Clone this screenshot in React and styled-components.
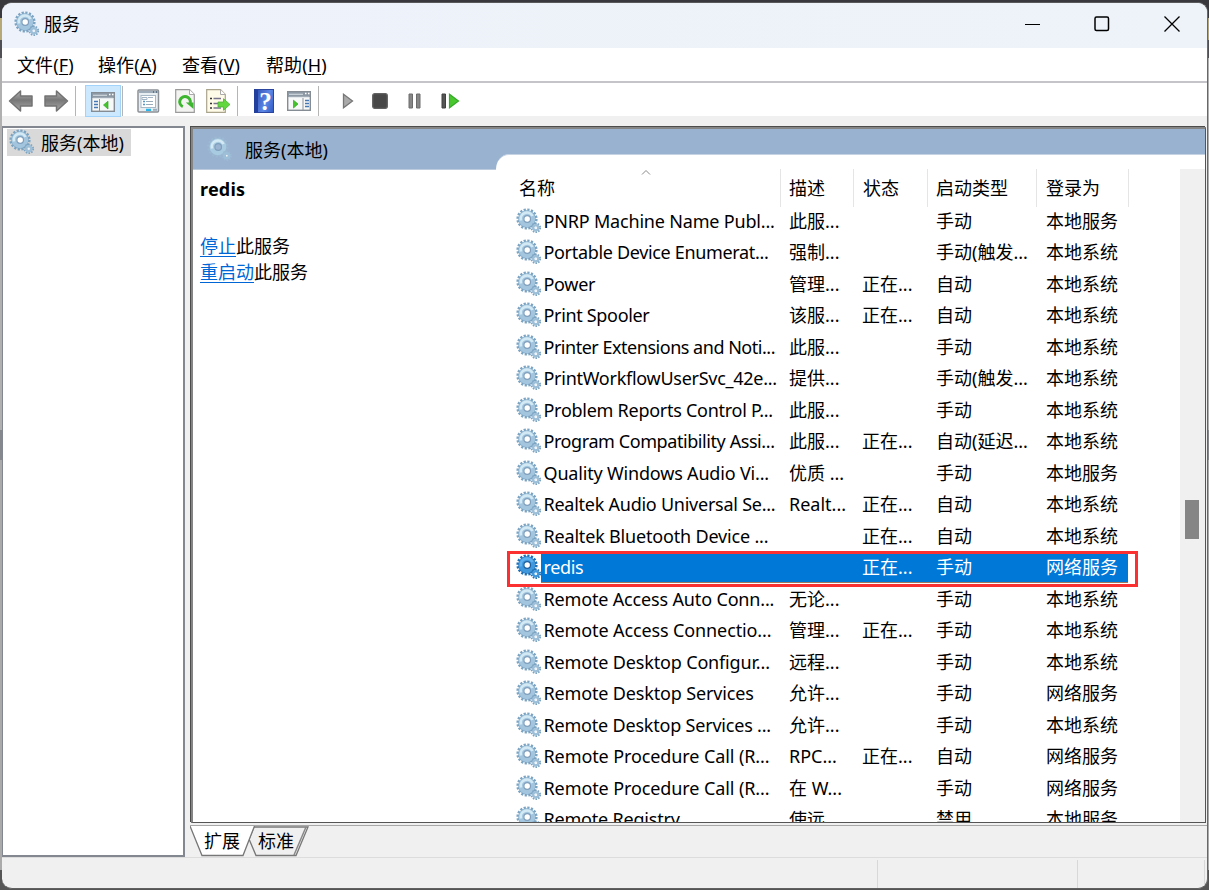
import styled, { createGlobalStyle } from "styled-components";

const GlobalStyle = createGlobalStyle`
  * {
    box-sizing: border-box;
  }
  body {
    margin: 0;
    overflow: hidden;
    font-family: "Noto Sans", "Noto Sans CJK SC", sans-serif;
    font-size: 18px;
    color: #000;
  }
`;

// last value is the letter spacing of the name
const services = [
  ["PNRP Machine Name Publ...", "此服...", "", "手动", "本地服务", -0.18],
  ["Portable Device Enumerat...", "强制...", "", "手动(触发...", "本地系统", -0.33],
  ["Power", "管理...", "正在...", "自动", "本地系统", -0.3],
  ["Print Spooler", "该服...", "正在...", "自动", "本地系统", -0.33],
  ["Printer Extensions and Noti...", "此服...", "", "手动", "本地系统", -0.48],
  ["PrintWorkflowUserSvc_42e...", "提供...", "", "手动(触发...", "本地系统", -0.27],
  ["Problem Reports Control P...", "此服...", "", "手动", "本地系统", -0.27],
  ["Program Compatibility Assi...", "此服...", "正在...", "自动(延迟...", "本地系统", -0.42],
  ["Quality Windows Audio Vi...", "优质 ...", "", "手动", "本地服务", -0.18],
  ["Realtek Audio Universal Se...", "Realt...", "正在...", "自动", "本地系统", -0.25],
  ["Realtek Bluetooth Device ...", "", "正在...", "自动", "本地系统", -0.18],
  ["redis", "", "正在...", "手动", "网络服务", -0.35],
  ["Remote Access Auto Conn...", "无论...", "", "手动", "本地系统", -0.16],
  ["Remote Access Connectio...", "管理...", "正在...", "手动", "本地系统", -0.12],
  ["Remote Desktop Configur...", "远程...", "", "手动", "本地系统", -0.16],
  ["Remote Desktop Services", "允许...", "", "手动", "网络服务", -0.15],
  ["Remote Desktop Services ...", "允许...", "", "手动", "本地系统", -0.2],
  ["Remote Procedure Call (R...", "RPC...", "正在...", "自动", "网络服务", -0.1],
  ["Remote Procedure Call (R...", "在 W...", "", "手动", "网络服务", -0.1],
  ["Remote Registry", "使远...", "", "禁用", "本地服务", -0.2],
].map(([name, desc, status, type, login, spacing]) => ({ name, desc, status, type, login, spacing }));

const GearIcon = ({ active, faint }) => {
  const body = active ? "#3f97dc" : faint ? "#a9cbe2" : "#a3c6de";
  const edge = active ? "#1f6fb4" : faint ? "#9bb9d2" : "#7ba3c2";
  const light = active ? "#5eb1ee" : "#d3eaf5";
  return (
    <svg width="26" height="26" viewBox="0 0 26 26">
      <circle cx="11" cy="11" r="9.3" fill="none" stroke={edge} strokeWidth="2.6" strokeDasharray="2.2 1.453" />
      <circle cx="11" cy="11" r="6.2" fill="none" stroke={edge} strokeWidth="5" />
      <circle cx="10.9" cy="10.9" r="5.8" fill="none" stroke={body} strokeWidth="5" />
      <path d="M5 12.500A6.200 6.200 0 0 1 16.500 8" fill="none" stroke={light} strokeWidth="2.600" />
      <circle cx="11.200" cy="11" r="3.300" fill={faint ? "#9ab3d0" : "#fff"} stroke={active ? "#195f9f" : "#7f9fbd"} strokeWidth="1.200" />
      <circle cx="19.800" cy="19.800" r="4.300" fill="none" stroke={edge} strokeWidth="2" strokeDasharray="1.500 1.200" />
      <circle cx="19.800" cy="19.800" r="2.600" fill="none" stroke={active ? body : "#9dbfd8"} strokeWidth="2.400" />
      <circle cx="19.800" cy="19.800" r="1" fill="#e9f3f8" />
    </svg>
  );
};

const ArrowIcon = ({ flip }) => (
  <svg width="26" height="24" viewBox="0 0 26 24">
    <defs>
      <linearGradient id="arrow" x1="0" y1="0" x2="0" y2="1">
        <stop offset="0" stopColor="#b5b5b5" />
        <stop offset="0.45" stopColor="#777" />
        <stop offset="1" stopColor="#a8a8a8" />
      </linearGradient>
    </defs>
    <path
      transform={flip ? "translate(26 0) scale(-1 1)" : undefined}
      d="M1.5 12 12.500 2v5H24v10H12.500v5z"
      fill="url(#arrow)"
      stroke="#737373"
      strokeWidth="1.5"
      strokeLinejoin="round"
    />
  </svg>
);

const PaneIcon = ({ action }) => (
  <svg width="24" height="20" viewBox="0 0 24 20">
    <rect x=".7" y=".7" width="22.6" height="18.6" fill="#f7f8f8" stroke="#868c94" strokeWidth="1.4" />
    <path d="M1 1h22v5H1z" fill="#8d98a5" />
    <path d="M2 3.2h14M2 6.2h20" stroke="#dce2e8" strokeWidth="1.1" />
    <path d="M18 2.5h1.5M21 2.5h1.5" stroke="#fff" strokeWidth="1.5" />
    {action ? (
      <>
        <path d="M16 7v12" stroke="#8c939a" />
        <path d="M18 9.5h4M18 12.5h4M18 15.5h4" stroke="#4678b5" strokeWidth="1.5" />
        <path d="M6.5 9.2 11 13l-4.500 4z" fill="#43c52a" stroke="#32a623" strokeWidth=".7" />
      </>
    ) : (
      <>
        <path d="M8.500 7v12" stroke="#8c939a" />
        <path d="M3 9.500h4M3 12.500h4M3 15.500h4" stroke="#4678b5" strokeWidth="1.500" />
        <path d="M17 9.200 12.500 13l4.500 4z" fill="#43c52a" stroke="#32a623" strokeWidth=".7" />
      </>
    )}
  </svg>
);

const PropertiesIcon = () => (
  <svg width="23" height="24" viewBox="0 0 23 24">
    <rect x="1" y="1" width="20.500" height="22" rx="1" fill="#e8edf1" stroke="#8b9097" strokeWidth="1.500" />
    <path d="M2 3h19" stroke="#9eabb8" strokeWidth="2" />
    <path d="M16 3h1M19 3h1" stroke="#4c6075" strokeWidth="1.500" />
    <rect x="4" y="6.500" width="14.500" height="12" fill="#fff" stroke="#a8b7c5" />
    <path d="M5 8.500h5v2H5zM11 8.500h5" fill="none" stroke="#a5b5c5" />
    <path d="M6 12.500h2M6 15.500h2" stroke="#5297cc" strokeWidth="1.500" />
    <path d="M9 12.500h7M9 15.500h7" stroke="#9baab9" />
    <path d="M9 20.800h5" stroke="#29b6ed" strokeWidth="2.200" />
    <path d="M16 20.800h4" stroke="#9babb9" strokeWidth="2" />
  </svg>
);

const RefreshIcon = () => (
  <svg width="20" height="24" viewBox="0 0 20 24">
    <path d="M.7.7h13.800l4.800 4.800v17.800H.7z" fill="#f3f3f1" stroke="#9b9b9b" strokeWidth="1.200" />
    <path d="M14.500.7v4.800h4.800" fill="#fff" stroke="#aaa" />
    <path d="M7.800 17.600A5.300 5.300 0 1 1 15.200 14" fill="none" stroke="#3db52e" strokeWidth="3" />
    <path d="M10.800 13.500h7.700V20z" fill="#3db52e" />
  </svg>
);

const ExportIcon = () => (
  <svg width="25" height="24" viewBox="0 0 25 24">
    <path d="M.7.7h13.800l4.800 4.800v17.800H.7z" fill="#fffbe9" stroke="#aaa48c" strokeWidth="1.200" />
    <path d="M14.500.7v4.800h4.800" fill="#fff" stroke="#aaa" />
    <path d="M4 9.500h2M4 14.500h2M4 19h2" stroke="#333" strokeWidth="1.600" />
    <path d="M7.500 9.500H15M7.500 14.500H12M7.500 19H15" stroke="#77758d" strokeWidth="1.400" />
    <path d="M12 13h5.500V9.700l6.500 5.800-6.500 5.800V18H12z" fill="#62d83e" stroke="#4cae38" strokeWidth=".8" />
  </svg>
);

const HelpGlyph = styled.span`
  width: 20px;
  height: 24px;
  border: 1px solid #2c459e;
  border-left: 4px solid #233f9d;
  background: linear-gradient(110deg, #3557ba, #5d88e6 55%, #315bc4);
  color: #fff;
  font: bold 25px/23px "Liberation Serif", serif;
  text-align: center;
`;

const Desktop = styled.div`
  width: 1209px;
  height: 890px;
  padding: 2px 1px 1px 2px;
  background: linear-gradient(
    #39393d 0 18px,
    #b7a878 18px 40px,
    #505054 40px 58px,
    #b0b0b0 58px 430px,
    #85898d 430px 460px,
    #aaa 460px 870px,
    #555 870px
  );
`;

const Window = styled.div`
  height: 887px;
  display: flex;
  flex-direction: column;
  overflow: hidden;
  background: #f0f0f0;
  border-top: 1px solid #59595c;
  border-right: 1px solid #68686b;
  border-bottom: 1px solid #606060;
  border-radius: 10px;
`;

const TitleBar = styled.header`
  height: 45px;
  flex: none;
  display: flex;
  align-items: center;
  padding: 0 0 3px 12px;
  background: linear-gradient(90deg, #eef2fb, #edf3f8);

  .title {
    margin-left: 4px;
    flex: 1;
    line-height: 42px;
  }
`;

const WindowButton = styled.div`
  width: ${({ $w }) => $w || 70}px;
  height: 42px;
  display: flex;
  justify-content: center;
  align-items: center;
`;

const MenuBar = styled.nav`
  height: 35px;
  flex: none;
  display: flex;
  padding-left: 15px;
  gap: 24px;
  line-height: 34px;
  background: #fff;
  border-bottom: 2px solid #c5c5c9;

  u {
    text-decoration-thickness: 1px;
    text-underline-offset: 2px;
  }
`;

const MenuItem = styled.span`
  width: ${({ $w }) => $w}px;
  white-space: nowrap;
  letter-spacing: 0.1px;
`;

const ToolBar = styled.div`
  height: 33px;
  flex: none;
  display: flex;
  align-items: center;
  padding: 2px 0 0 6px;
  background: #fff;
`;

const Tool = styled.div`
  display: flex;
  flex: none;
  margin-left: ${({ $gap }) => $gap || 0}px;
`;

const ToggleTool = styled.div`
  width: 36px;
  height: 32px;
  margin-left: 9px;
  padding-top: 3px;
  display: flex;
  justify-content: center;
  align-items: center;
  background: #cce8ff;
  border: 1px solid #a2d3fa;
`;

const Separator = styled.i`
  width: 1px;
  height: 30px;
  margin-left: ${({ $gap }) => $gap}px;
  background: #b5b5b5;
`;

const Main = styled.main`
  height: 731px;
  flex: none;
  display: flex;
  margin-top: 10px;
`;

const Tree = styled.aside`
  width: 183px;
  height: 731px;
  padding: 1px 3px;
  background: #fff;
  border: 2px solid #828790;
  border-left-width: 1px;
`;

const TreeItem = styled.div`
  display: flex;
  align-items: center;
  width: 124px;
  height: 27px;
  padding: 0 0 2px 2px;
  gap: 6px;
  margin-left: 1px;
  background: #d9d9d9;
  white-space: nowrap;
`;

const Content = styled.section`
  width: 1017px;
  margin-left: 5px;
  display: flex;
  flex-direction: column;
`;

const Frame = styled.div`
  width: 1015px;
  height: 696px;
  flex: none;
  display: flex;
  margin: 1px 0 2px 1px;
  background: #99b2d0;
  border: solid #555;
  border-width: 2px 1px 1px 2px;
  border-top-color: #858585;
  border-left-color: #858585;
  box-shadow: -1px -1px 0 #4c4c4c;
  overflow: hidden;
`;

const Details = styled.div`
  width: 303px;
  flex: none;
  display: flex;
  flex-direction: column;
`;

const DetailsHeader = styled.div`
  height: 41px;
  flex: none;
  display: flex;
  align-items: center;
  padding-left: 14px;
  gap: 12px;
  border-bottom: 1px solid #bccbde;
`;

const DetailsBody = styled.div`
  flex: 1;
  padding: 7px 7px;
  background: #fff;

  h1 {
    margin: 0 0 31px;
    font-size: 18px;
    line-height: 25px;
    letter-spacing: 0.2px;
  }

  p {
    margin: 0;
    line-height: 26px;
  }

  a {
    color: #0066d5;
    text-decoration: underline;
    text-underline-offset: 3px;
    text-decoration-thickness: 1px;
  }
`;

const List = styled.div`
  flex: 1;
  display: flex;
  margin-top: 25px;
  border-top: 1px solid #c6d3e3;
  background: #fff;
  border-top-left-radius: 13px 15px;
`;

const Table = styled.div`
  width: 684px;
  padding-top: 14px;
  overflow: hidden;
`;

const Columns = styled.div`
  position: relative;
  display: grid;
  grid-template-columns: 285px 73px 74px 109px 92px;
  height: 36.5px;
  line-height: 38px;

  span {
    padding-left: 8px;
    border-right: 1px solid #e5e5e5;
  }

  span:first-child {
    padding-left: 23px;
  }

  span:nth-child(3),
  span:nth-child(5) {
    padding-left: 9px;
  }

  svg {
    position: absolute;
    left: 145px;
    top: 0;
  }
`;

const Row = styled.div`
  position: relative;
  width: 633px;
  height: 31.5px;
  display: flex;
  padding-left: 20px;
  line-height: 31px;
  color: ${({ $selected }) => ($selected ? "#fff" : "#000")};

  > svg {
    flex: none;
    margin: 2px -1px 0 0;
  }
`;

const Cells = styled.div`
  display: grid;
  grid-template-columns: 239px 73px 74px 110px 91px;
  height: 31px;
  background: ${({ $selected }) => ($selected ? "#0078d7" : "none")};
  border-bottom: ${({ $selected }) => ($selected ? "1px solid #9a7960" : "none")};

  span {
    padding-left: 9px;
    white-space: nowrap;
  }
`;

const Name = styled.div`
  padding-left: 2.5px;
  white-space: nowrap;
  letter-spacing: ${({ $spacing }) => $spacing}px;
`;

const Highlight = styled.div`
  position: absolute;
  left: 11px;
  top: -1.5px;
  width: 631px;
  height: 36px;
  border: 3px solid #fb3030;
  z-index: 1;
`;

const ScrollBar = styled.div`
  width: 25px;
  margin-top: 14px;
  padding: 331px 6px 0 5px;
  background: #f0f0f0;

  i {
    display: block;
    height: 39px;
    background: #858585;
  }
`;

const Tabs = styled.div`
  position: relative;
  height: 32px;
  display: flex;
  padding: 1px 0 0 14px;
  gap: 18px;
  line-height: 28px;
  border-top: 1px solid #a8a8a8;

  svg {
    position: absolute;
    left: 0;
    top: 0;
  }

  span {
    position: relative;
  }
`;

const StatusBar = styled.footer`
  flex: 1;
  display: flex;
  border-top: 1px solid #dcdcdc;
  padding-top: 2px;

  i {
    width: 200px;
    border-right: 1px solid #d8d8d8;
  }

  i:first-child {
    width: 876px;
  }

  i:last-child {
    width: 127px;
  }
`;

const App = () => {
  return (
    <Desktop>
      <GlobalStyle />
      <Window>
        <TitleBar>
          <GearIcon />
          <span className="title">服务</span>
          <WindowButton $w={68}>
            <svg width="16" height="16">
              <path d="M0 8.500h15" stroke="#000" />
            </svg>
          </WindowButton>
          <WindowButton $w={70}>
            <svg width="16" height="16">
              <rect x="1" y="1" width="13.500" height="13.500" rx="1.500" fill="none" stroke="#000" strokeWidth="1.500" />
            </svg>
          </WindowButton>
          <WindowButton $w={70}>
            <svg width="16" height="16">
              <path d="m.5.500 15 15m0-15-15 15" stroke="#000" strokeWidth="1.300" />
            </svg>
          </WindowButton>
        </TitleBar>

        <MenuBar>
          <MenuItem $w={57}>文件(<u>F</u>)</MenuItem>
          <MenuItem $w={60}>操作(<u>A</u>)</MenuItem>
          <MenuItem $w={60}>查看(<u>V</u>)</MenuItem>
          <MenuItem $w={62}>帮助(<u>H</u>)</MenuItem>
        </MenuBar>

        <ToolBar>
          <Tool><ArrowIcon /></Tool>
          <Tool $gap={9}><ArrowIcon flip /></Tool>
          <Separator $gap={6} />
          <ToggleTool><PaneIcon /></ToggleTool>
          <Separator $gap={1} />
          <Tool $gap={14}><PropertiesIcon /></Tool>
          <Tool $gap={15}><RefreshIcon /></Tool>
          <Tool $gap={11}><ExportIcon /></Tool>
          <Separator $gap={6} />
          <Tool $gap={16}><HelpGlyph>?</HelpGlyph></Tool>
          <Tool $gap={13}><PaneIcon action /></Tool>
          <Separator $gap={7} />
          <Tool $gap={23}>
            <svg width="12" height="16">
              <path d="M1.500 1.200 10.500 8l-9 6.800z" fill="#aaa" stroke="#777" strokeWidth="1.300" />
            </svg>
          </Tool>
          <Tool $gap={18}>
            <svg width="16" height="16">
              <rect x=".7" y=".7" width="14.600" height="14.600" rx="2" fill="#484848" stroke="#626262" strokeWidth="1.300" />
            </svg>
          </Tool>
          <Tool $gap={20}>
            <svg width="14" height="16">
              <path d="M1 1h3.500v14H1zM8.500 1H12v14H8.500z" fill="#878787" stroke="#6c6c6c" />
            </svg>
          </Tool>
          <Tool $gap={19}>
            <svg width="19" height="16">
              <path d="M1 1h3.500v14H1z" fill="#555" stroke="#404040" />
              <path d="M8.500 1.200 17.500 8l-9 6.800z" fill="#49c72f" stroke="#35a928" strokeWidth="1.200" />
            </svg>
          </Tool>
        </ToolBar>

        <Main>
          <Tree>
            <TreeItem>
              <GearIcon />
              服务(本地)
            </TreeItem>
          </Tree>

          <Content>
            <Frame>
              <Details>
                <DetailsHeader>
                  <GearIcon faint />
                  服务(本地)
                </DetailsHeader>
                <DetailsBody>
                  <h1>redis</h1>
                  <p><a>停止</a>此服务</p>
                  <p><a>重启动</a>此服务</p>
                </DetailsBody>
              </Details>
              <List>
                <Table>
                  <Columns>
                    <span>名称</span>
                    <span>描述</span>
                    <span>状态</span>
                    <span>启动类型</span>
                    <span>登录为</span>
                    <svg width="10" height="7">
                      <path d="m1 5.500 4-4 4 4" fill="none" stroke="#888" />
                    </svg>
                  </Columns>
                  {services.map(({ name, desc, status, type, login, spacing }, idx) => {
                    const selected = name === "redis";
                    return (
                      <Row key={idx} $selected={selected}>
                        <GearIcon active={selected} />
                        <Cells $selected={selected}>
                          <Name $spacing={spacing}>{name}</Name>
                          <span>{desc}</span>
                          <span>{status}</span>
                          <span>{type}</span>
                          <span>{login}</span>
                        </Cells>
                        {selected && <Highlight />}
                      </Row>
                    );
                  })}
                </Table>
                <ScrollBar><i /></ScrollBar>
              </List>
            </Frame>
            <Tabs>
              <svg width="122" height="32">
                <path d="M64 1h54l-12 28.500H66L59 13z" fill="#f0f0f0" stroke="#777" strokeWidth="1.300" />
                <path d="M116 1 104 29" stroke="#888" strokeWidth="1.500" />
                <path d="M0 0 12 29.500h41L64.500 0z" fill="#fff" />
                <path d="M0 0 12 29.500h41L64.500 0" fill="none" stroke="#777" strokeWidth="1.300" />
              </svg>
              <span>扩展</span>
              <span>标准</span>
            </Tabs>
          </Content>
        </Main>

        <StatusBar>
          <i />
          <i />
          <i />
        </StatusBar>
      </Window>
    </Desktop>
  );
};

export default App;
